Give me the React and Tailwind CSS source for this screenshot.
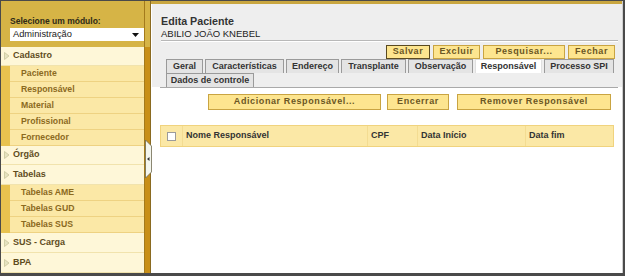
import React from "react";

const F = { fontFamily: '"Liberation Sans", Arial, sans-serif' };

function Tri() {
  return (
    <svg width="6" height="8" viewBox="0 0 6 8" className="mr-[3px] ml-[3px] shrink-0">
      <path d="M0.5 0.5 L5 4 L0.5 7.5 Z" fill="#e6e3c0" stroke="#c9c59a" strokeWidth="0.8" />
    </svg>
  );
}

function Top({ label, h = "h-[20px]" }) {
  return (
    <div className={`${h} flex items-center bg-[#fef7d8] border-b border-[#f1e3ad] text-[9px] font-bold text-[#5f4c1d]`}>
      <Tri />
      <span>{label}</span>
    </div>
  );
}

function Sub({ items }) {
  return (
    <div className="flex bg-[#e8c24f]">
      <div className="w-[9px] shrink-0" />
      <div className="flex-1 flex flex-col">
        {items.map((t) => (
          <div key={t} className="h-[16px] flex items-center pl-[11px] bg-[#fbe8a6] border-b border-[#eed282] text-[8.7px] font-bold text-[#8b6a1e]">
            {t}
          </div>
        ))}
      </div>
    </div>
  );
}

function Btn({ w, children, dark, h = "h-[14px]" }) {
  return (
    <div
      className={`${w} ${h} flex items-center justify-center bg-[#fde58f] border ${dark ? "border-[#5a4a20]" : "border-[#c9a442]"} text-[9px] font-bold tracking-[0.6px] text-[#6a5624]`}
    >
      {children}
    </div>
  );
}

function Tab({ w, children, active }) {
  return (
    <div
      className={`${w} h-[14px] flex items-center justify-center border border-b-0 ${active ? "bg-white border-[#e0e0e0]" : "bg-[#e4e4e4] border-[#9a9a9a]"} text-[9px] font-bold text-[#333]`}
    >
      {children}
    </div>
  );
}

export default function App() {
  return (
    <div style={F} className="w-[625px] h-[276px] flex border-t border-l border-r-2 border-b-[3px] border-[#4a4a4a] overflow-hidden relative">
      {/* Sidebar */}
      <div className="w-[143px] shrink-0 flex flex-col bg-[#fef7d8]">
        <div className="h-[46px] bg-[#d6b446] pl-[9px] pt-[15px]">
          <div className="text-[8.5px] font-bold text-[#2e2a18] leading-[10px]">Selecione um módulo:</div>
          <div className="mt-[2px] h-[13px] bg-white flex items-center justify-between pl-[3px] pr-[5px] text-[9.3px] text-[#222]">
            <span>Administração</span>
            <svg width="7" height="4" viewBox="0 0 7 4"><path d="M0 0 L7 0 L3.5 4 Z" fill="#111" /></svg>
          </div>
        </div>
        <Top label="Cadastro" h="h-[19px]" />
        <Sub items={["Paciente", "Responsável", "Material", "Profissional", "Fornecedor"]} />
        <Top label="Órgão" />
        <Top label="Tabelas" />
        <Sub items={["Tabelas AME", "Tabelas GUD", "Tabelas SUS"]} />
        <Top label="SUS - Carga" />
        <Top label="BPA" />
      </div>

      {/* Divider */}
      <div className="w-[7px] shrink-0 flex flex-col border-l border-[#a37a1c]">
        <div className="h-[46px] bg-[#d6b446] border-r border-[#8a6a20]" />
        <div className="flex-1 bg-[#c88f17] border-r border-[#8a6a20]" />
      </div>
      <svg className="absolute left-[144px] top-[139px]" width="7" height="38" viewBox="0 0 7 38">
        <path d="M0.5 0 L6.5 6 L6.5 32 L0.5 38 Z" fill="#f4f6ee" stroke="#6f6a50" strokeWidth="0.8" />
        <path d="M2 19 L4.5 17 L4.5 21 Z" fill="#333" />
      </svg>

      {/* Main */}
      <div className="flex-1 flex flex-col bg-white border-r border-[#cfcfcf]">
        <div className="h-[3px] bg-[#c9a640]" />
        <div className="bg-[#eeeeee] pl-[9px] pr-[4px] pt-[10px] border-l border-white">
          <div className="text-[10.7px] font-bold text-[#333] leading-[14px]">Edita Paciente</div>
          <div className="text-[9.5px] text-[#222] leading-[11px]">ABILIO JOÃO KNEBEL</div>
          <div className="mt-[1px] border-t border-[#b8b8b8] border-b border-b-white" />
          <div className="flex justify-end gap-[3px] pr-[3px] mt-[3px]">
            <Btn w="w-[44px]" dark>Salvar</Btn>
            <Btn w="w-[47px]">Excluir</Btn>
            <Btn w="w-[82px]">Pesquisar...</Btn>
            <Btn w="w-[47px]">Fechar</Btn>
          </div>
          <div className="flex gap-[2px] pl-[5px]">
            <Tab w="w-[37px]">Geral</Tab>
            <Tab w="w-[79px]">Características</Tab>
            <Tab w="w-[53px]">Endereço</Tab>
            <Tab w="w-[65px]">Transplante</Tab>
            <Tab w="w-[65px]">Observação</Tab>
            <Tab w="w-[67px]" active>Responsável</Tab>
            <Tab w="w-[70px]">Processo SPI</Tab>
          </div>
          <div className="flex pl-[5px]">
            <Tab w="w-[88px]">Dados de controle</Tab>
          </div>
        </div>
        <div className="ml-[9px] mr-[4px] border-t border-[#a9a9a9]" />
        <div className="flex pl-[57px] mt-[6px]">
          <Btn w="w-[173px]" h="h-[16px]">Adicionar Responsável...</Btn>
          <div className="ml-[6px]"><Btn w="w-[62px]" h="h-[16px]">Encerrar</Btn></div>
          <div className="ml-[8px]"><Btn w="w-[154px]" h="h-[16px]">Remover Responsável</Btn></div>
        </div>
        <div className="ml-[9px] mt-[15px] w-[454px] h-[22px] flex bg-[#fbe8a6] border border-[#f0d37e] text-[9px] font-bold text-[#333]">
          <div className="w-[22px] flex items-center justify-center border-r border-[#f3dc92]">
            <div className="w-[9px] h-[9px] bg-white border border-[#9b9b9b]" />
          </div>
          <div className="w-[185px] flex items-center pl-[3px] border-r border-[#f3dc92]">Nome Responsável</div>
          <div className="w-[50px] flex items-center pl-[3px] border-r border-[#f3dc92]">CPF</div>
          <div className="w-[108px] flex items-center pl-[3px] border-r border-[#f3dc92]">Data Início</div>
          <div className="flex-1 flex items-center pl-[3px]">Data fim</div>
        </div>
      </div>
    </div>
  );
}
